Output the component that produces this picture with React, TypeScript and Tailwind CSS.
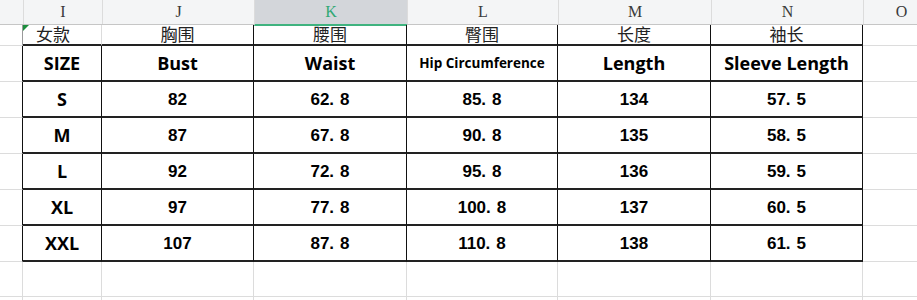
import React from 'react';

const letters = ['I', 'J', 'K', 'L', 'M', 'N'];
const labels = ['女款', '胸围', '腰围', '臀围', '长度', '袖长'];
const heads = ['SIZE', 'Bust', 'Waist', 'Hip Circumference', 'Length', 'Sleeve Length'];

const rows = [
  ['S', '82', '62.8', '85.8', '134', '57.5'],
  ['M', '87', '67.8', '90.8', '135', '58.5'],
  ['L', '92', '72.8', '95.8', '136', '59.5'],
  ['XL', '97', '77.8', '100.8', '137', '60.5'],
  ['XXL', '107', '87.8', '110.8', '138', '61.5'],
];

// the period in the sheet's font is wide, so give it room
const Num = ({ v }: { v: string }) => {
  const [a, b] = v.split('.');
  if (b === undefined) return <>{v}</>;
  return (
    <>
      {a}
      <span className="mr-[6px]">.</span>
      {b}
    </>
  );
};

const grid =
  'grid grid-cols-[23px_79px_152px_153px_151px_153px_152px_76px] grid-rows-[25px_21px_36px_36px_36px_36px_36px_36px_35px_40px]';

export default function App() {
  return (
    <div className="w-[917px] h-[300px] overflow-hidden bg-white">
      <div className={grid}>
        {/* column letters */}
        <div className="bg-[#f4f5f6] border-b border-[#c6c6c6]" />
        {letters.map((l) => (
          <div key={l} className="bg-[#f4f5f6] border-b border-[#c6c6c6] flex flex-col">
            <div className="h-[5px]" />
            <div
              className={`flex-1 flex items-center justify-center border-l border-[#dcdcdc] font-['Liberation_Serif',serif] text-[16px] ${
                l === 'K' ? 'bg-[#d3d6da] text-[#32a874] border-b-2 border-b-[#3fb37f]' : 'text-[#3a3a3a]'
              }`}
            >
              {l}
            </div>
          </div>
        ))}
        <div className="bg-[#f4f5f6] border-b border-[#c6c6c6] flex flex-col">
          <div className="h-[5px]" />
          <div className="flex-1 flex items-center justify-center border-l border-[#dcdcdc] font-['Liberation_Serif',serif] text-[16px] text-[#3a3a3a]">
            O
          </div>
        </div>

        {/* chinese labels row */}
        <div className="border-r border-[#9a9a9a] border-b border-b-[#dcdcdc]" />
        {labels.map((t, i) => (
          <div
            key={t}
            className={`relative flex items-end justify-center border-b-2 border-b-[#222] border-r font-['Noto_Sans_CJK_SC',sans-serif] text-[17px] leading-[20px] text-[#222] ${
              i === 0 ? 'border-r-[#dcdcdc] pr-[18px]' : 'border-r-[#111]'
            }`}
          >
            {i === 0 && (
              <div className="absolute left-0 top-0 w-0 h-0 border-t-[6px] border-t-[#1d8f3e] border-r-[6px] border-r-transparent" />
            )}
            {t}
          </div>
        ))}
        <div className="border-b border-[#dcdcdc]" />

        {/* english heading row */}
        <div className="border-r border-[#111] border-b border-b-[#dcdcdc]" />
        {heads.map((h) => (
          <div
            key={h}
            className={`flex items-center justify-center border-r border-[#111] border-b-2 border-b-[#222] font-['Open_Sans',sans-serif] font-bold text-black ${
              h === 'Hip Circumference' ? 'text-[13.5px]' : 'text-[18px]'
            }`}
          >
            {h}
          </div>
        ))}
        <div className="border-b border-[#dcdcdc]" />

        {/* size rows */}
        {rows.map((r) => (
          <React.Fragment key={r[0]}>
            <div className="border-r border-[#111] border-b border-b-[#dcdcdc]" />
            {r.map((v, i) => (
              <div
                key={i}
                className={`flex items-center justify-center border-r border-[#111] border-b-2 border-b-[#222] font-bold text-black ${
                  i === 0
                    ? "font-['Open_Sans',sans-serif] text-[18px]"
                    : "font-['Liberation_Sans',sans-serif] text-[17px] pt-[2px]"
                }`}
              >
                {i === 0 ? v : <Num v={v} />}
              </div>
            ))}
            <div className="border-b border-[#dcdcdc]" />
          </React.Fragment>
        ))}

        {/* empty rows below */}
        {[0, 1].map((k) => (
          <React.Fragment key={k}>
            <div className="border-r border-[#dcdcdc] border-b" />
            {letters.map((l) => (
              <div key={l} className="border-r border-b border-[#dcdcdc]" />
            ))}
            <div className="border-b border-[#dcdcdc]" />
          </React.Fragment>
        ))}
      </div>
    </div>
  );
}
